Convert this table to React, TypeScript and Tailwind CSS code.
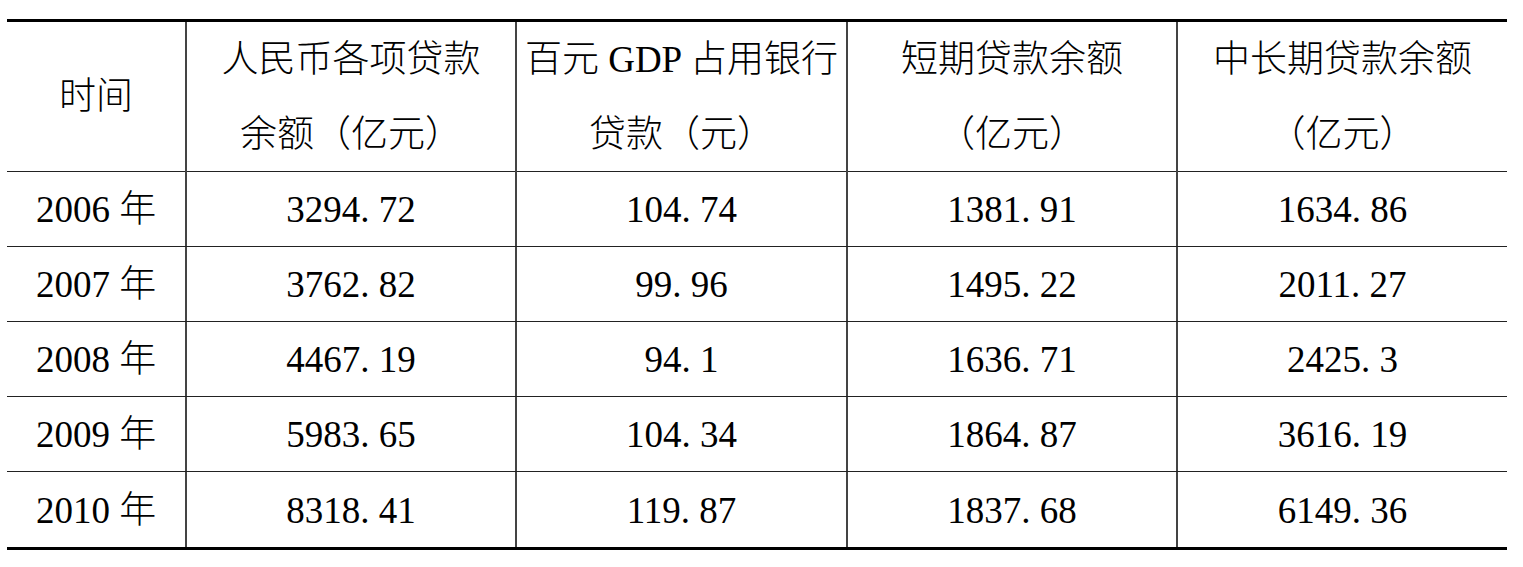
import React from "react";

interface Row {
  year: string;
  total: string;
  perGdp: string;
  shortTerm: string;
  longTerm: string;
}

const rows: Row[] = [
  { year: "2006 年", total: "3294. 72", perGdp: "104. 74", shortTerm: "1381. 91", longTerm: "1634. 86" },
  { year: "2007 年", total: "3762. 82", perGdp: "99. 96", shortTerm: "1495. 22", longTerm: "2011. 27" },
  { year: "2008 年", total: "4467. 19", perGdp: "94. 1", shortTerm: "1636. 71", longTerm: "2425. 3" },
  { year: "2009 年", total: "5983. 65", perGdp: "104. 34", shortTerm: "1864. 87", longTerm: "3616. 19" },
  { year: "2010 年", total: "8318. 41", perGdp: "119. 87", shortTerm: "1837. 68", longTerm: "6149. 36" },
];

const gridCols = "grid grid-cols-[178px_330px_331px_330px_331px]";
const cell = "flex items-center justify-center text-center";
const bodyCell = `${cell} pt-[2px]`;
const divider = "border-l-2 border-[#444]";

const App: React.FC = () => {
  return (
    <div
      className="min-h-screen bg-white pl-[7px] pt-[19px] text-black text-[37px] font-light"
      style={{ fontFamily: '"Liberation Serif", "Noto Sans CJK SC", serif' }}
    >
      <div className="w-[1500px] border-y-[3px] border-black">
        {/* header */}
        <div className={`${gridCols} h-[150px] border-b border-[#222]`}>
          <div className={cell}>时间</div>
          <div className={`${cell} ${divider} leading-[75px]`}>
            人民币各项贷款
            <br />
            余额（亿元）
          </div>
          <div className={`${cell} ${divider} leading-[75px]`}>
            百元 GDP 占用银行
            <br />
            贷款（元）
          </div>
          <div className={`${cell} ${divider} leading-[75px]`}>
            短期贷款余额
            <br />
            （亿元）
          </div>
          <div className={`${cell} ${divider} leading-[75px]`}>
            中长期贷款余额
            <br />
            （亿元）
          </div>
        </div>

        {rows.map((r, i) => (
          <div
            key={r.year}
            className={`${gridCols} h-[75px] ${i < rows.length - 1 ? "border-b border-[#222]" : ""}`}
          >
            <div className={bodyCell}>{r.year}</div>
            <div className={`${bodyCell} ${divider}`}>{r.total}</div>
            <div className={`${bodyCell} ${divider}`}>{r.perGdp}</div>
            <div className={`${bodyCell} ${divider}`}>{r.shortTerm}</div>
            <div className={`${bodyCell} ${divider}`}>{r.longTerm}</div>
          </div>
        ))}
      </div>
    </div>
  );
};

export default App;
